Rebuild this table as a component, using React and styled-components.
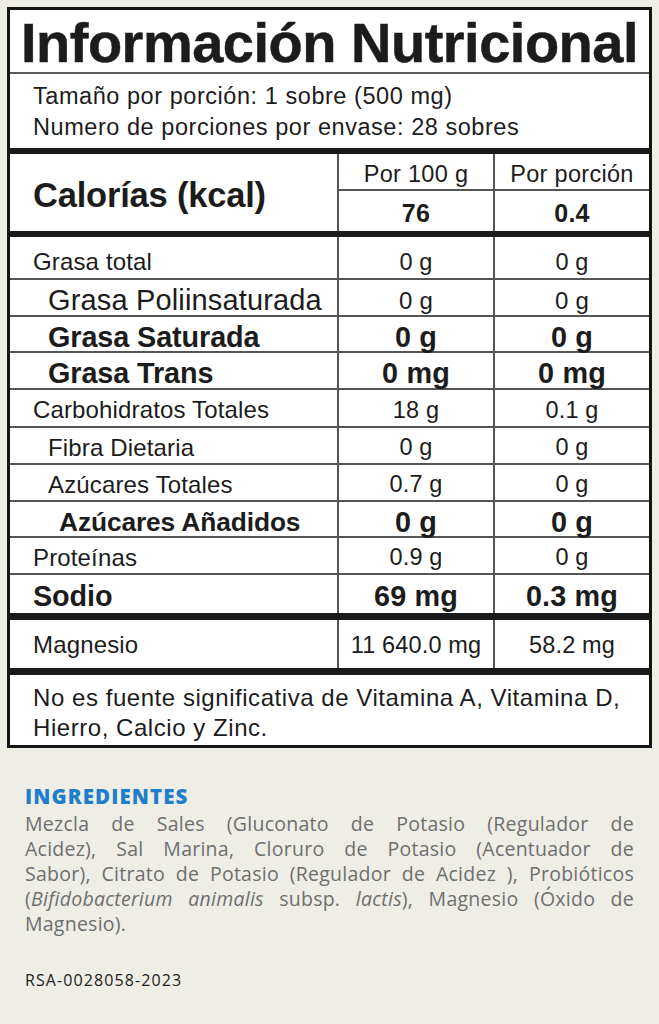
import React from "react";
import styled, { createGlobalStyle } from "styled-components";

const Global = createGlobalStyle`
  html, body { margin: 0; padding: 0; background: #eeede6; }
  body { font-family: "Liberation Sans", Arial, sans-serif; color: #1a1a1a; }
  * { box-sizing: border-box; }
`;

const Page = styled.div`
  width: 659px;
  min-height: 1024px;
  background: #eeede6;
  padding-top: 7px;
`;

const Label = styled.div`
  margin: 0 7px;
  border: 3px solid #151515;
  background: #fff;
  font-family: "Liberation Sans", Arial, sans-serif;
  color: #1c1c1c;
`;

const Title = styled.h1`
  margin: 0;
  height: 64px;
  border-bottom: 2px solid #5a5a5a;
  font-size: 56px;
  font-weight: 700;
  letter-spacing: -0.5px;
  line-height: 66px;
  text-align: center;
  -webkit-text-stroke: 0.5px #1c1c1c;
`;

const Serving = styled.div`
  padding: 7px 23px 0;
  height: 74px;
  font-size: 23.5px;
  line-height: 31px;
  letter-spacing: 0.55px;
`;

const ThickBar = styled.div`
  height: ${(p) => p.$h || 6}px;
  background: #1a1a1a;
`;

const CalBlock = styled.div`
  display: grid;
  grid-template-columns: 327px 156px 156px;
  grid-template-rows: 37px 40px;
`;

const CalLabel = styled.div`
  grid-row: 1 / span 2;
  display: flex;
  align-items: center;
  padding: 5px 0 0 23px;
  font-size: 34.5px;
  font-weight: 700;
  letter-spacing: -0.2px;
`;

const CalCell = styled.div`
  display: flex;
  align-items: center;
  justify-content: center;
  padding-top: ${(p) => (p.$bold ? 4 : 6)}px;
  border-left: 2px solid #555;
  border-bottom: ${(p) => (p.$top ? "2px solid #555" : "none")};
  font-size: ${(p) => (p.$bold ? 25 : 23.5)}px;
  font-weight: ${(p) => (p.$bold ? 700 : 400)};
  letter-spacing: 0.3px;
`;

const Row = styled.div`
  display: grid;
  grid-template-columns: 327px 156px 156px;
  height: ${(p) => p.$h}px;
  border-top: ${(p) => (p.$first ? "none" : "2px solid #555")};
`;

const NameCell = styled.div`
  display: flex;
  align-items: center;
  padding-top: ${(p) => p.$pt || 4}px;
  padding-left: ${(p) => 23 + (p.$indent || 0)}px;
  font-size: ${(p) => p.$size}px;
  font-weight: ${(p) => (p.$bold ? 700 : 400)};
  letter-spacing: ${(p) => (p.$bold ? "-0.1px" : "0.15px")};
  white-space: nowrap;
`;

const ValueCell = styled.div`
  display: flex;
  align-items: center;
  justify-content: center;
  padding-top: ${(p) => p.$pt || 4}px;
  border-left: 2px solid #555;
  font-size: ${(p) => p.$size}px;
  font-weight: ${(p) => (p.$bold ? 700 : 400)};
  letter-spacing: 0.15px;
  white-space: nowrap;
`;

const Note = styled.div`
  height: 70px;
  padding: 8px 23px 0;
  font-size: 24px;
  line-height: 30px;
  letter-spacing: 0.55px;
`;

const Ingredients = styled.section`
  padding: 36px 25px 0;
  font-family: "Open Sans", "Noto Sans", sans-serif;
`;

const IngTitle = styled.h2`
  margin: 0 0 3px;
  font-size: 20.5px;
  font-weight: 800;
  color: #1f7ecb;
  letter-spacing: 1.1px;
  line-height: 24px;
`;

const IngLine = styled.span`
  display: block;
  font-size: 19.5px;
  line-height: 25px;
  color: #6f6f6f;
  letter-spacing: 0.25px;
  text-align: justify;
  text-align-last: ${(p) => (p.$last ? "left" : "justify")};
`;

const Reg = styled.div`
  margin-top: 33px;
  font-family: "Open Sans", "Noto Sans", sans-serif;
  font-size: 16px;
  color: #222;
  letter-spacing: 1.1px;
`;

const rows = [
  { name: "Grasa total", a: "0 g", b: "0 g", h: 41, size: 24, first: true, pt: 9 },
  { name: "Grasa Poliinsaturada", a: "0 g", b: "0 g", h: 37, size: 29, indent: 15, vsize: 24 },
  { name: "Grasa Saturada", a: "0 g", b: "0 g", h: 36, size: 28.8, indent: 15, bold: true },
  { name: "Grasa Trans", a: "0 mg", b: "0 mg", h: 37, size: 28.8, indent: 15, bold: true },
  { name: "Carbohidratos Totales", a: "18 g", b: "0.1 g", h: 38, size: 24 },
  { name: "Fibra Dietaria", a: "0 g", b: "0 g", h: 37, size: 24, indent: 15 },
  { name: "Azúcares Totales", a: "0.7 g", b: "0 g", h: 37, size: 24, indent: 15 },
  { name: "Azúcares Añadidos", a: "0 g", b: "0 g", h: 36, size: 26.3, indent: 26, bold: true, vsize: 28.8 },
  { name: "Proteínas", a: "0.9 g", b: "0 g", h: 37, size: 24 },
  { name: "Sodio", a: "69 mg", b: "0.3 mg", h: 40, size: 28.8, bold: true },
];

export default function App() {
  return (
    <Page>
      <Global />
      <Label>
        <Title>Información Nutricional</Title>
        <Serving>
          Tamaño por porción: 1 sobre (500 mg)
          <br />
          Numero de porciones por envase: 28 sobres
        </Serving>
        <ThickBar $h={6} />
        <CalBlock>
          <CalLabel>Calorías (kcal)</CalLabel>
          <CalCell $top>Por 100 g</CalCell>
          <CalCell $top>Por porción</CalCell>
          <CalCell $bold>76</CalCell>
          <CalCell $bold>0.4</CalCell>
        </CalBlock>
        <ThickBar $h={6} />
        {rows.map((r) => (
          <Row key={r.name} $h={r.h} $first={r.first}>
            <NameCell $indent={r.indent} $size={r.size} $bold={r.bold} $pt={r.pt}>
              {r.name}
            </NameCell>
            <ValueCell $size={r.vsize || (r.bold ? 28.8 : 23.5)} $bold={r.bold} $pt={r.pt}>
              {r.a}
            </ValueCell>
            <ValueCell $size={r.vsize || (r.bold ? 28.8 : 23.5)} $bold={r.bold} $pt={r.pt}>
              {r.b}
            </ValueCell>
          </Row>
        ))}
        <ThickBar $h={7} />
        <Row $h={48} $first>
          <NameCell $size={24} $pt={2}>Magnesio</NameCell>
          <ValueCell $size={23.5} $pt={2}>11 640.0 mg</ValueCell>
          <ValueCell $size={23.5} $pt={2}>58.2 mg</ValueCell>
        </Row>
        <ThickBar $h={7} />
        <Note>
          No es fuente significativa de Vitamina A, Vitamina D,
          <br />
          Hierro, Calcio y Zinc.
        </Note>
      </Label>
      <Ingredients>
        <IngTitle>INGREDIENTES</IngTitle>
        <IngLine>Mezcla de Sales (Gluconato de Potasio (Regulador de</IngLine>
        <IngLine>Acidez), Sal Marina, Cloruro de Potasio (Acentuador de</IngLine>
        <IngLine>Sabor), Citrato de Potasio (Regulador de Acidez ), Probióticos</IngLine>
        <IngLine>
          (<i>Bifidobacterium animalis</i> subsp. <i>lactis</i>), Magnesio (Óxido de
        </IngLine>
        <IngLine $last>Magnesio).</IngLine>
        <Reg>RSA-0028058-2023</Reg>
      </Ingredients>
    </Page>
  );
}
